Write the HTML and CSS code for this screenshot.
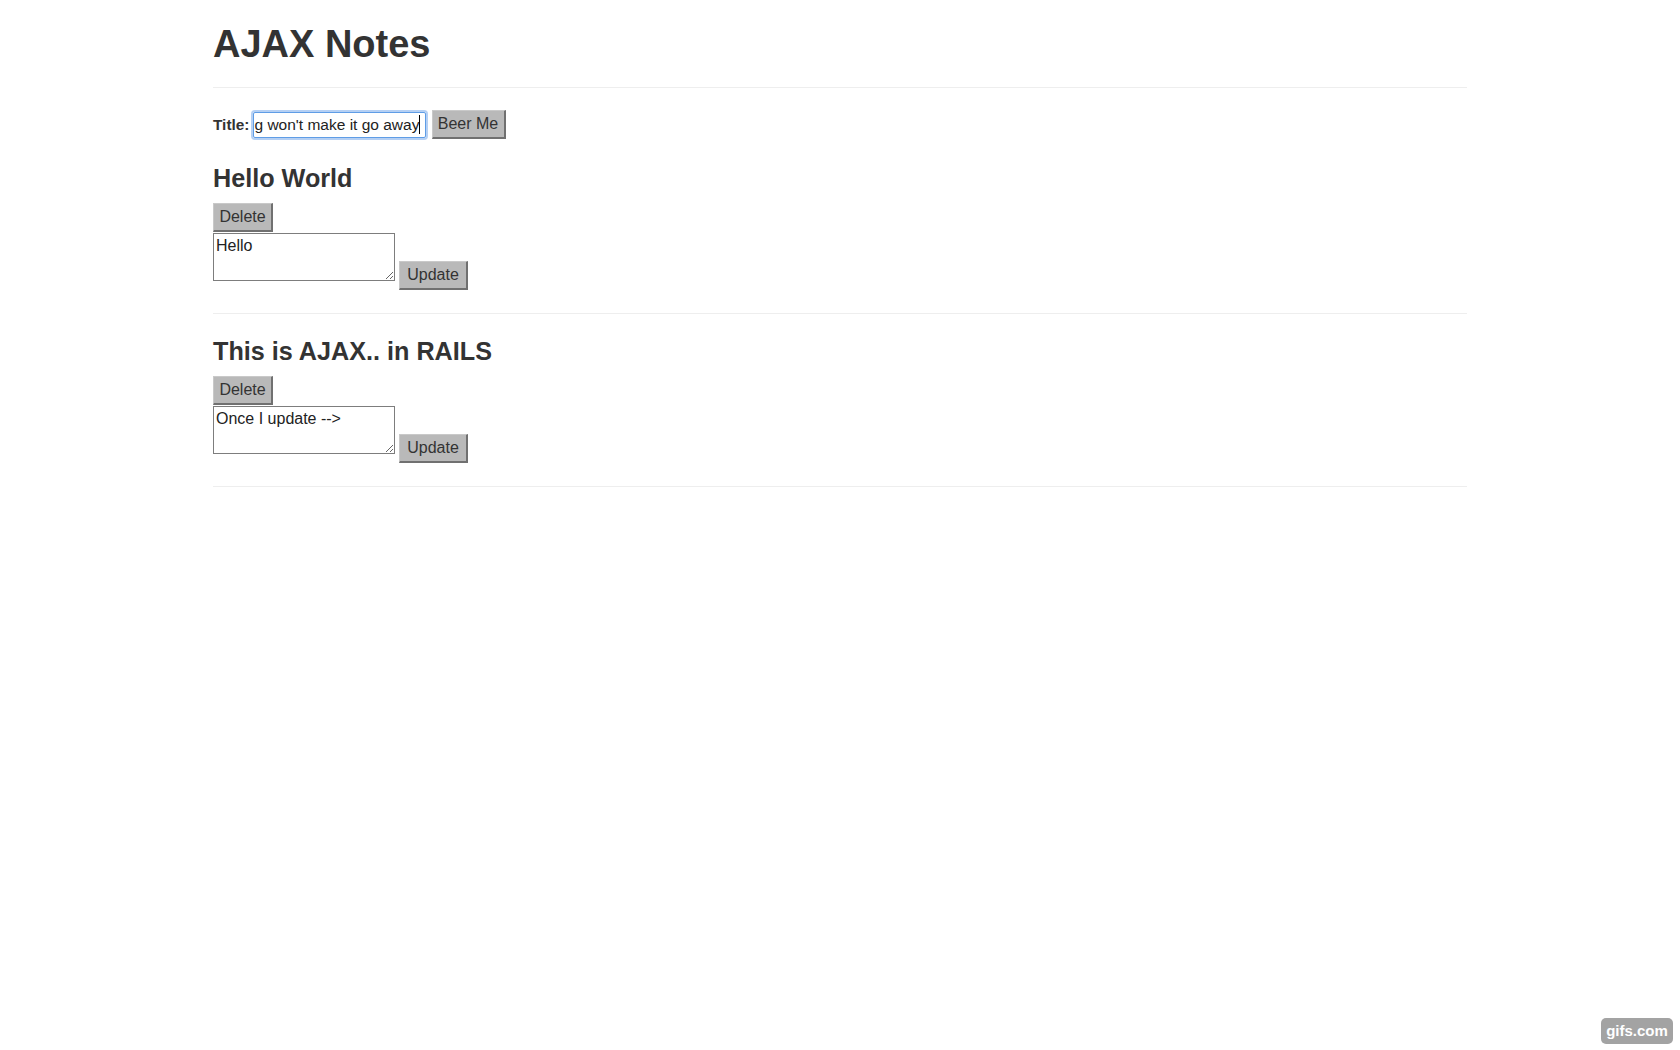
FILE: index.html
```html
<!DOCTYPE html>
<html lang="en">
<head>
<meta charset="utf-8">
<title>AJAX Notes</title>
<link rel="stylesheet" href="styles.css">
</head>
<body>
<div class="container">
  <h1 class="page-title">AJAX Notes</h1>
  <div class="rule"></div>
  <form class="new-note">
    <label class="label">Title:</label>
    <div class="text-input"><span class="value">g won't make it go away</span><span class="caret"></span></div>
    <button type="button" class="btn btn-beer">Beer Me</button>
  </form>
  <div class="notes">
    <div class="note">
      <h3 class="note-title">Hello World</h3>
      <div class="delete-form"><button type="button" class="btn btn-delete">Delete</button></div>
      <div class="edit-row">
        <textarea class="note-body">Hello</textarea>
        <button type="button" class="btn btn-update">Update</button>
      </div>
    </div>
    <div class="note">
      <h3 class="note-title">This is AJAX.. in RAILS</h3>
      <div class="delete-form"><button type="button" class="btn btn-delete">Delete</button></div>
      <div class="edit-row">
        <textarea class="note-body">Once I update --&gt;</textarea>
        <button type="button" class="btn btn-update">Update</button>
      </div>
    </div>
  </div>
</div>
<div class="watermark">gifs.com</div>
</body>
</html>
```

FILE: styles.css
```css
html, body {
  margin: 0;
  padding: 0;
  background: #ffffff;
}
body {
  font-family: "Liberation Sans", Arial, sans-serif;
  font-size: 15.4px;
  color: #333333;
}
.container {
  width: 1254px;
  margin: 0 auto;
}
.page-title {
  margin: 23px 0 0 0;
  font-size: 38px;
  line-height: 42px;
  font-weight: bold;
  color: #333333;
}
.rule {
  margin-top: 22px;
  border-top: 1px solid #eeeeee;
}
.new-note {
  display: flex;
  align-items: center;
  margin: 22px 0 0 0;
  height: 29px;
}
.label {
  font-weight: bold;
  margin-right: 3px;
  color: #333333;
}
.text-input {
  box-sizing: border-box;
  width: 173px;
  height: 26px;
  border: 1px solid #5f9de6;
  box-shadow: 0 0 0 2px rgba(120, 170, 235, 0.55);
  border-radius: 2px;
  display: flex;
  align-items: center;
  padding: 0 0 0 1px;
  overflow: hidden;
  white-space: nowrap;
  color: #222222;
  font-size: 15.5px;
}
.caret {
  display: inline-block;
  flex: none;
  width: 1px;
  height: 19px;
  background: #000000;
}
.btn {
  box-sizing: border-box;
  height: 29px;
  padding: 0;
  font-family: "Liberation Sans", Arial, sans-serif;
  font-size: 16px;
  color: #333333;
  background: #b9b9b9;
  border-style: solid;
  border-width: 1px 2px 2px 1px;
  border-color: #c9c9c9 #707070 #707070 #c9c9c9;
  border-radius: 0;
  cursor: pointer;
}
.btn-beer {
  width: 74px;
  margin-left: 6px;
}
.btn-delete {
  width: 60px;
}
.btn-update {
  width: 69px;
  margin-left: 4px;
  margin-top: 28px;
}
.notes {
  margin-top: 2px;
}
.note {
  padding: 23px 0 23px 0;
  border-bottom: 1px solid #eeeeee;
}
.note-title {
  margin: 0 0 11px 0;
  font-size: 25.2px;
  line-height: 28px;
  font-weight: bold;
  color: #333333;
}
.delete-form {
  display: flex;
}
.edit-row {
  display: flex;
  align-items: flex-start;
  margin-top: 1px;
}
.note-body {
  box-sizing: border-box;
  width: 182px;
  height: 48px;
  margin: 0;
  padding: 3px 2px;
  border: 1px solid #7d7d7d;
  border-radius: 0;
  font-family: "Liberation Sans", Arial, sans-serif;
  font-size: 16px;
  line-height: 18px;
  color: #222222;
  background: #ffffff;
}
.watermark {
  position: absolute;
  left: 1601px;
  top: 1018px;
  width: 72px;
  height: 26px;
  border-radius: 5px;
  background: #a3a3a3;
  color: #ffffff;
  font-family: "Liberation Sans", Arial, sans-serif;
  font-weight: bold;
  font-size: 15px;
  line-height: 26px;
  text-align: center;
}
```
